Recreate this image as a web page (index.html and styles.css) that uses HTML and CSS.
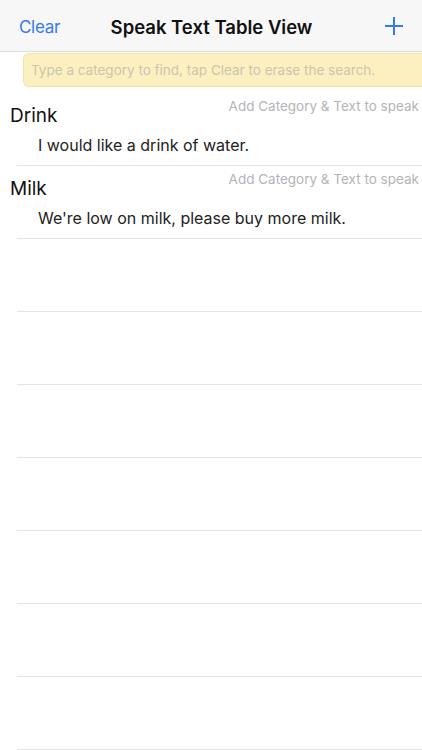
FILE: index.html
```html
<!DOCTYPE html>
<html lang="en">
<head>
  <meta charset="UTF-8" />
  <meta name="viewport" content="width=device-width, initial-scale=1.0"/>
  <title>Speak Text Table View</title>
  <link rel="stylesheet" href="styles.css">
</head>
<body>
  <!-- Navigation bar -->
  <header class="navbar">
    <button class="nav-btn">Clear</button>
    <h1 class="nav-title">Speak Text Table View</h1>
    <button class="nav-btn add-btn" aria-label="Add">
      <svg width="20" height="20" viewBox="0 0 20 20">
        <path d="M10 1 V19 M1 10 H19" stroke="#3478f6" stroke-width="2" fill="none"/>
      </svg>
    </button>
  </header>

  <!-- Search -->
  <div class="search-wrap">
    <input type="text" class="search" placeholder="Type a category to find, tap Clear to erase the search." />
  </div>

  <!-- Table -->
  <ul class="table" id="rows">
    <li class="row">
      <div class="row-top">
        <span class="category">Drink</span>
        <span class="hint">Add Category &amp; Text to speak</span>
      </div>
      <div class="speech">I would like a drink of water.</div>
    </li>
    <li class="row">
      <div class="row-top">
        <span class="category">Milk</span>
        <span class="hint">Add Category &amp; Text to speak</span>
      </div>
      <div class="speech">We're low on milk, please buy more milk.</div>
    </li>
    <li class="row empty"></li>
    <li class="row empty"></li>
    <li class="row empty"></li>
    <li class="row empty"></li>
    <li class="row empty"></li>
    <li class="row empty"></li>
    <li class="row empty"></li>
  </ul>
</body>
</html>
```

FILE: styles.css
```css
body {
  margin: 0;
  font-family: Inter, "Liberation Sans", Arial, sans-serif;
  background: #fff;
  color: #111;
}
.navbar {
  height: 52px;
  display: grid;
  grid-template-columns: 1fr auto 1fr;
  align-items: center;
  padding: 2px 18px 0 19px;
  background: #f7f7f7;
  border-bottom: 1px solid #dcdcdc;
  box-sizing: border-box;
}
.nav-btn {
  border: none;
  background: none;
  padding: 0;
  font: inherit;
  font-size: 17px;
  letter-spacing: -0.3px;
  color: #3478f6;
  justify-self: start;
}
.add-btn {
  display: flex;
  justify-self: end;
  margin-top: -1px;
}
.nav-title {
  margin: 0;
  font-size: 18.5px;
  font-weight: 600;
  color: #111;
}
.search-wrap {
  height: 41px;
  padding: 1px 0 0 23px;
  box-sizing: border-box;
}
.search {
  width: 100%;
  height: 34px;
  box-sizing: border-box;
  border: 1px solid #f3e3a6;
  border-right: none;
  border-radius: 6px 0 0 6px;
  background: #fdf0c0;
  padding: 0 0 0 7px;
  font: inherit;
  font-size: 13.5px;
  outline: none;
}
.search::placeholder {
  color: #cbc5ad;
}
.table {
  list-style: none;
  margin: 0;
  padding: 0;
}
.row {
  height: 73px;
  margin-left: 17px;
  border-bottom: 1px solid #e4e4e6;
  box-sizing: border-box;
}
.row-top {
  display: flex;
  justify-content: space-between;
  align-items: flex-start;
  margin-left: -7px;
  padding-right: 3px;
}
.category {
  font-size: 19px;
  margin-top: 11px;
}
.hint {
  font-size: 13.5px;
  color: #b4b4b8;
  margin-top: 5px;
}
.speech {
  margin: 8px 0 0 21px;
  font-size: 16px;
  color: #222;
}
```
